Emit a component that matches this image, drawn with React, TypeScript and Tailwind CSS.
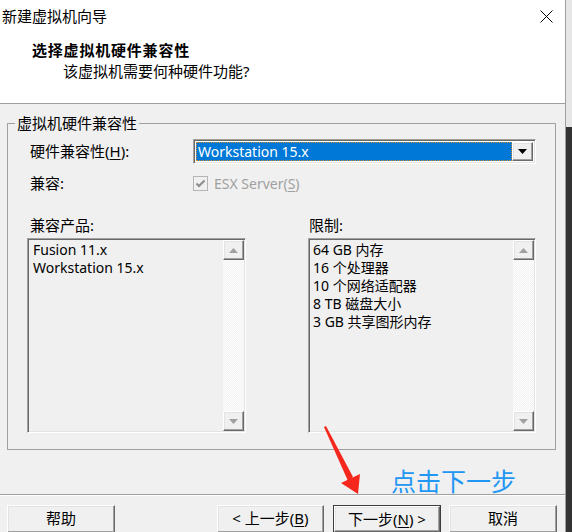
const sunken =
  'border border-t-[#a0a0a0] border-l-[#a0a0a0] border-b-white border-r-white shadow-[inset_1px_1px_0_#696969,inset_-1px_-1px_0_#e3e3e3]';
const raised =
  'bg-[#f0f0f0] border border-t-white border-l-white border-b-[#696969] border-r-[#696969] shadow-[inset_-1px_-1px_0_#a0a0a0,inset_1px_1px_0_#e3e3e3]';

function Arrow({ up, color }: { up?: boolean; color: string }) {
  return (
    <svg width="9" height="5" viewBox="0 0 9 5">
      <polygon points={up ? '0,5 9,5 4.5,0' : '0,0 9,0 4.5,5'} fill={color} />
    </svg>
  );
}

function ScrollBar() {
  return (
    <div className="w-[21px] flex flex-col bg-[#f8f8f8] bg-[image:repeating-conic-gradient(#ffffff_0_25%,#f1f1f1_0_50%)] bg-[length:2px_2px]">
      <div className={`${raised} h-[20px] flex items-center justify-center`}>
        <Arrow up color="#a0a0a0" />
      </div>
      <div className="flex-1" />
      <div className={`${raised} h-[20px] flex items-center justify-center`}>
        <Arrow color="#a0a0a0" />
      </div>
    </div>
  );
}

function ListBox({ items, width, pad }: { items: string[]; width: string; pad: string }) {
  return (
    <div className={`${sunken} ${width} h-[195px] flex bg-[#f0f0f0] p-[1px]`}>
      <div className={`flex-1 pt-[1px] ${pad} text-[14px] leading-[18px]`}>
        {items.map((item) => (
          <div key={item}>{item}</div>
        ))}
      </div>
      <ScrollBar />
    </div>
  );
}

function DialogButton({ children, width, main }: { children: React.ReactNode; width: string; main?: boolean }) {
  return (
    <div className={`${width} h-[28px] ${main ? 'border border-[#3c3c3c]' : ''}`}>
      <div className={`${raised} h-full flex items-start justify-center pt-[2px] text-[15px] leading-[20px]`}>
        {children}
      </div>
    </div>
  );
}

export default function App() {
  return (
    <div className="relative w-[572px] h-[532px] overflow-hidden bg-[#f0f0f0] text-black font-['Noto_Sans','Noto_Sans_CJK_SC',sans-serif]">
      <div className="flex h-full">
        <div className="w-[566px] h-full flex flex-col border-r border-[#a0a0a0]">
          {/* header */}
          <div className="h-[104px] shrink-0 bg-white border-b border-[#a0a0a0] pt-[6px]">
            <div className="flex items-center justify-between h-[20px] pl-[2px] pr-[12px]">
              <span className="text-[15px] leading-[20px]">新建虚拟机向导</span>
              <svg width="13" height="13" viewBox="0 0 13 13">
                <path d="M0.5 0.5 L12.5 12.5 M12.5 0.5 L0.5 12.5" stroke="#000" strokeWidth="1" />
              </svg>
            </div>
            <p className="mt-[14px] pl-[32px] text-[15px] leading-[20px] font-bold tracking-[0.8px]">
              选择虚拟机硬件兼容性
            </p>
            <p className="mt-[1px] pl-[63px] text-[15px] leading-[20px]">该虚拟机需要何种硬件功能?</p>
          </div>

          {/* body */}
          <fieldset className="ml-[7px] mt-[9px] w-[549px] border border-[#a0a0a0] pb-[16px]">
            <legend className="ml-[7px] px-[2px] text-[15px] leading-[20px]">虚拟机硬件兼容性</legend>

            <div className="flex items-center mt-[6px] h-[25px]">
              <span className="w-[185px] pl-[22px] text-[15px]">
                硬件兼容性(<u className="underline-offset-2">H</u>):
              </span>
              <div className={`${sunken} w-[343px] h-[25px] bg-white flex p-[2px]`}>
                <div className="flex-1 flex items-center bg-[#0078d7] border border-dotted border-[#d98a2b] pl-[1px] text-white text-[14px] leading-[18px]">
                  Workstation 15.x
                </div>
                <div className={`${raised} w-[21px] flex items-center justify-center`}>
                  <Arrow color="#000" />
                </div>
              </div>
            </div>

            <div className="flex items-center mt-[10px] h-[18px]">
              <span className="w-[185px] pl-[22px] text-[15px]">兼容:</span>
              <svg width="15" height="15" viewBox="0 0 15 15">
                <rect x="0.5" y="0.5" width="14" height="14" fill="#f0f0f0" stroke="#b5b5b5" />
                <path d="M3.5 7.5 L6 10 L11.5 4.5" fill="none" stroke="#8d8d8d" strokeWidth="2" />
              </svg>
              <span className="ml-[6px] text-[14px] text-[#a0a0a0]">
                ESX Server(<u className="underline-offset-2">S</u>)
              </span>
            </div>

            <div className="flex items-center mt-[23px] h-[20px] pl-[22px] text-[15px]">
              <span className="w-[279px]">兼容产品:</span>
              <span>限制:</span>
            </div>

            <div className="flex mt-[3px] pl-[19px]">
              <ListBox items={['Fusion 11.x', 'Workstation 15.x']} width="w-[219px]" pad="pl-[4px]" />
              <div className="ml-[62px]">
                <ListBox
                  items={['64 GB 内存', '16 个处理器', '10 个网络适配器', '8 TB 磁盘大小', '3 GB 共享图形内存']}
                  width="w-[228px]"
                  pad="pl-[3px]"
                />
              </div>
            </div>
          </fieldset>

          {/* footer */}
          <div className="mt-[44px] h-[2px] border-t border-[#a0a0a0] border-b border-b-white" />
          <div className="flex mt-[9px]">
            <div className="ml-[7px]">
              <DialogButton width="w-[108px]">帮助</DialogButton>
            </div>
            <div className="ml-[102px]">
              <DialogButton width="w-[107px]">
                &lt; 上一步(<u className="underline-offset-2">B</u>)
              </DialogButton>
            </div>
            <div className="ml-[9px]">
              <DialogButton width="w-[108px]" main>
                下一步(<u className="underline-offset-2">N</u>) &gt;
              </DialogButton>
            </div>
            <div className="ml-[8px]">
              <DialogButton width="w-[108px]">取消</DialogButton>
            </div>
          </div>
        </div>
        <div className="flex-1 flex flex-col">
          <div className="h-[127px] bg-[#e6e6e6]" />
          <div className="flex-1 bg-[#333333]" />
        </div>
      </div>

      {/* annotation overlay */}
      <svg className="absolute left-[318px] top-[424px]" width="46" height="72" viewBox="318 424 46 72">
        <polygon points="324,427 326,426 353,477 348,481" fill="#f5261b" />
        <polygon points="341,483 360,474 358,494" fill="#f5261b" />
      </svg>
      <span className="absolute left-[391px] top-[468px] text-[25px] leading-[27px] text-[#2196f3]">点击下一步</span>
    </div>
  );
}
